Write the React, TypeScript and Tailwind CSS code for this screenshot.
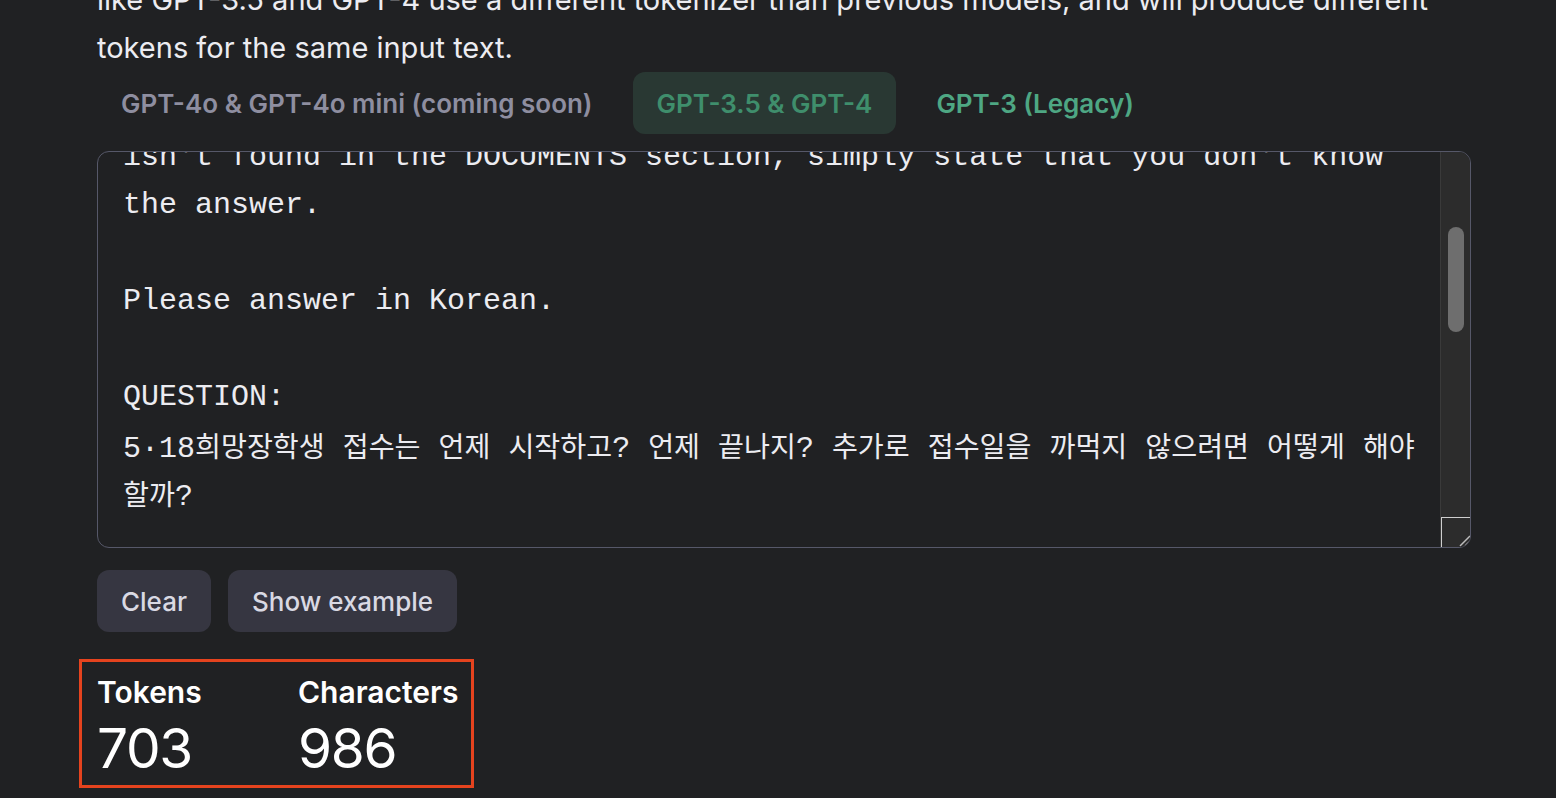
import React from "react";

const sans = "font-['Inter','Noto_Sans',sans-serif]";
const mono = "font-['Liberation_Mono','Noto_Sans_CJK_KR',monospace]";

const lines = [
  "isn't found in the DOCUMENTS section, simply state that you don't know",
  "the answer.",
  "",
  "Please answer in Korean.",
  "",
  "QUESTION:",
  "5·18희망장학생 접수는 언제 시작하고? 언제 끝나지? 추가로 접수일을 까먹지 않으려면 어떻게 해야",
  "할까?",
  "",
];

function Line({ text }: { text: string }) {
  const parts = text.split(/([\uac00-\ud7a3]+)/);
  return (
    <div className="h-[48px] whitespace-pre">
      {parts.map((p, i) =>
        /[\uac00-\ud7a3]/.test(p) ? (
          <span key={i} className="text-[28.2px] font-['Noto_Sans_CJK_KR',sans-serif]">
            {p}
          </span>
        ) : (
          <span key={i}>{p}</span>
        )
      )}
    </div>
  );
}

function Tabs() {
  return (
    <div className="flex gap-4">
      <button className="h-[62px] rounded-xl px-6 text-[26px] font-semibold text-[#8e8ea0]">
        GPT-4o &amp; GPT-4o mini (coming soon)
      </button>
      <button className="h-[62px] rounded-xl bg-[#293833] px-6 text-[26px] font-semibold text-[#3f8e6c]">
        GPT-3.5 &amp; GPT-4
      </button>
      <button className="h-[62px] rounded-xl px-6 text-[26px] font-semibold text-[#4ea783]">
        GPT-3 (Legacy)
      </button>
    </div>
  );
}

function Editor() {
  return (
    <div className="mt-[17px] flex h-[397px] overflow-hidden rounded-xl border border-[#565869]">
      <div className="flex-1 overflow-hidden pl-[25px]">
        <div className={`-mt-[19px] text-[30px] leading-[48px] text-[#ececf1] ${mono}`}>
          {lines.map((l, i) => (
            <Line key={i} text={l} />
          ))}
        </div>
      </div>
      <div className="flex w-[30px] flex-col border-l border-[#3a3a3a] bg-[#2c2c2c]">
        <div className="ml-[7px] mt-[75px] h-[105px] w-[16px] rounded-full bg-[#6e6e6e]" />
        <div className="flex-1" />
        <div className="relative h-[30px] w-[30px] border-l border-t border-[#cfcfcf] bg-[#2c2c2c]">
          <svg className="absolute bottom-0 right-0" width="14" height="14" viewBox="0 0 14 14">
            <path d="M13 3 L3 13 M13 8 L8 13" stroke="#bdbdbd" strokeWidth="1.5" />
          </svg>
        </div>
      </div>
    </div>
  );
}

export default function App() {
  return (
    <main className={`h-[798px] overflow-hidden bg-[#202123] text-[#ececf1] ${sans}`}>
      <div className="ml-[97px] w-[1374px]">
        <p className="-mt-[24px] whitespace-nowrap text-[29px] leading-[48px]">
          like GPT-3.5 and GPT-4 use a different tokenizer than previous models, and will produce different
          <br />
          tokens for the same input text.
        </p>
        <Tabs />
        <Editor />
        <div className="mt-[22px] flex gap-[17px]">
          <button className="h-[62px] rounded-xl bg-[#363641] px-6 text-[26px] font-medium text-[#d9d9e3]">
            Clear
          </button>
          <button className="h-[62px] rounded-xl bg-[#363641] px-6 text-[26px] font-medium text-[#d9d9e3]">
            Show example
          </button>
        </div>
        <div className="-ml-[18px] mt-[27px] w-[395px] border-[3px] border-[#e5431e] pb-[5px] pl-[15px] pt-[12px]">
          <div className="flex">
            <div className="w-[201px]">
              <div className="text-[30px] font-semibold leading-[36px] text-white">Tokens</div>
              <div className="mt-[6px] text-[55px] leading-[64px] tracking-tight text-white">703</div>
            </div>
            <div>
              <div className="text-[30px] font-semibold leading-[36px] text-white">Characters</div>
              <div className="mt-[6px] text-[55px] leading-[64px] tracking-tight text-white">986</div>
            </div>
          </div>
        </div>
      </div>
    </main>
  );
}
